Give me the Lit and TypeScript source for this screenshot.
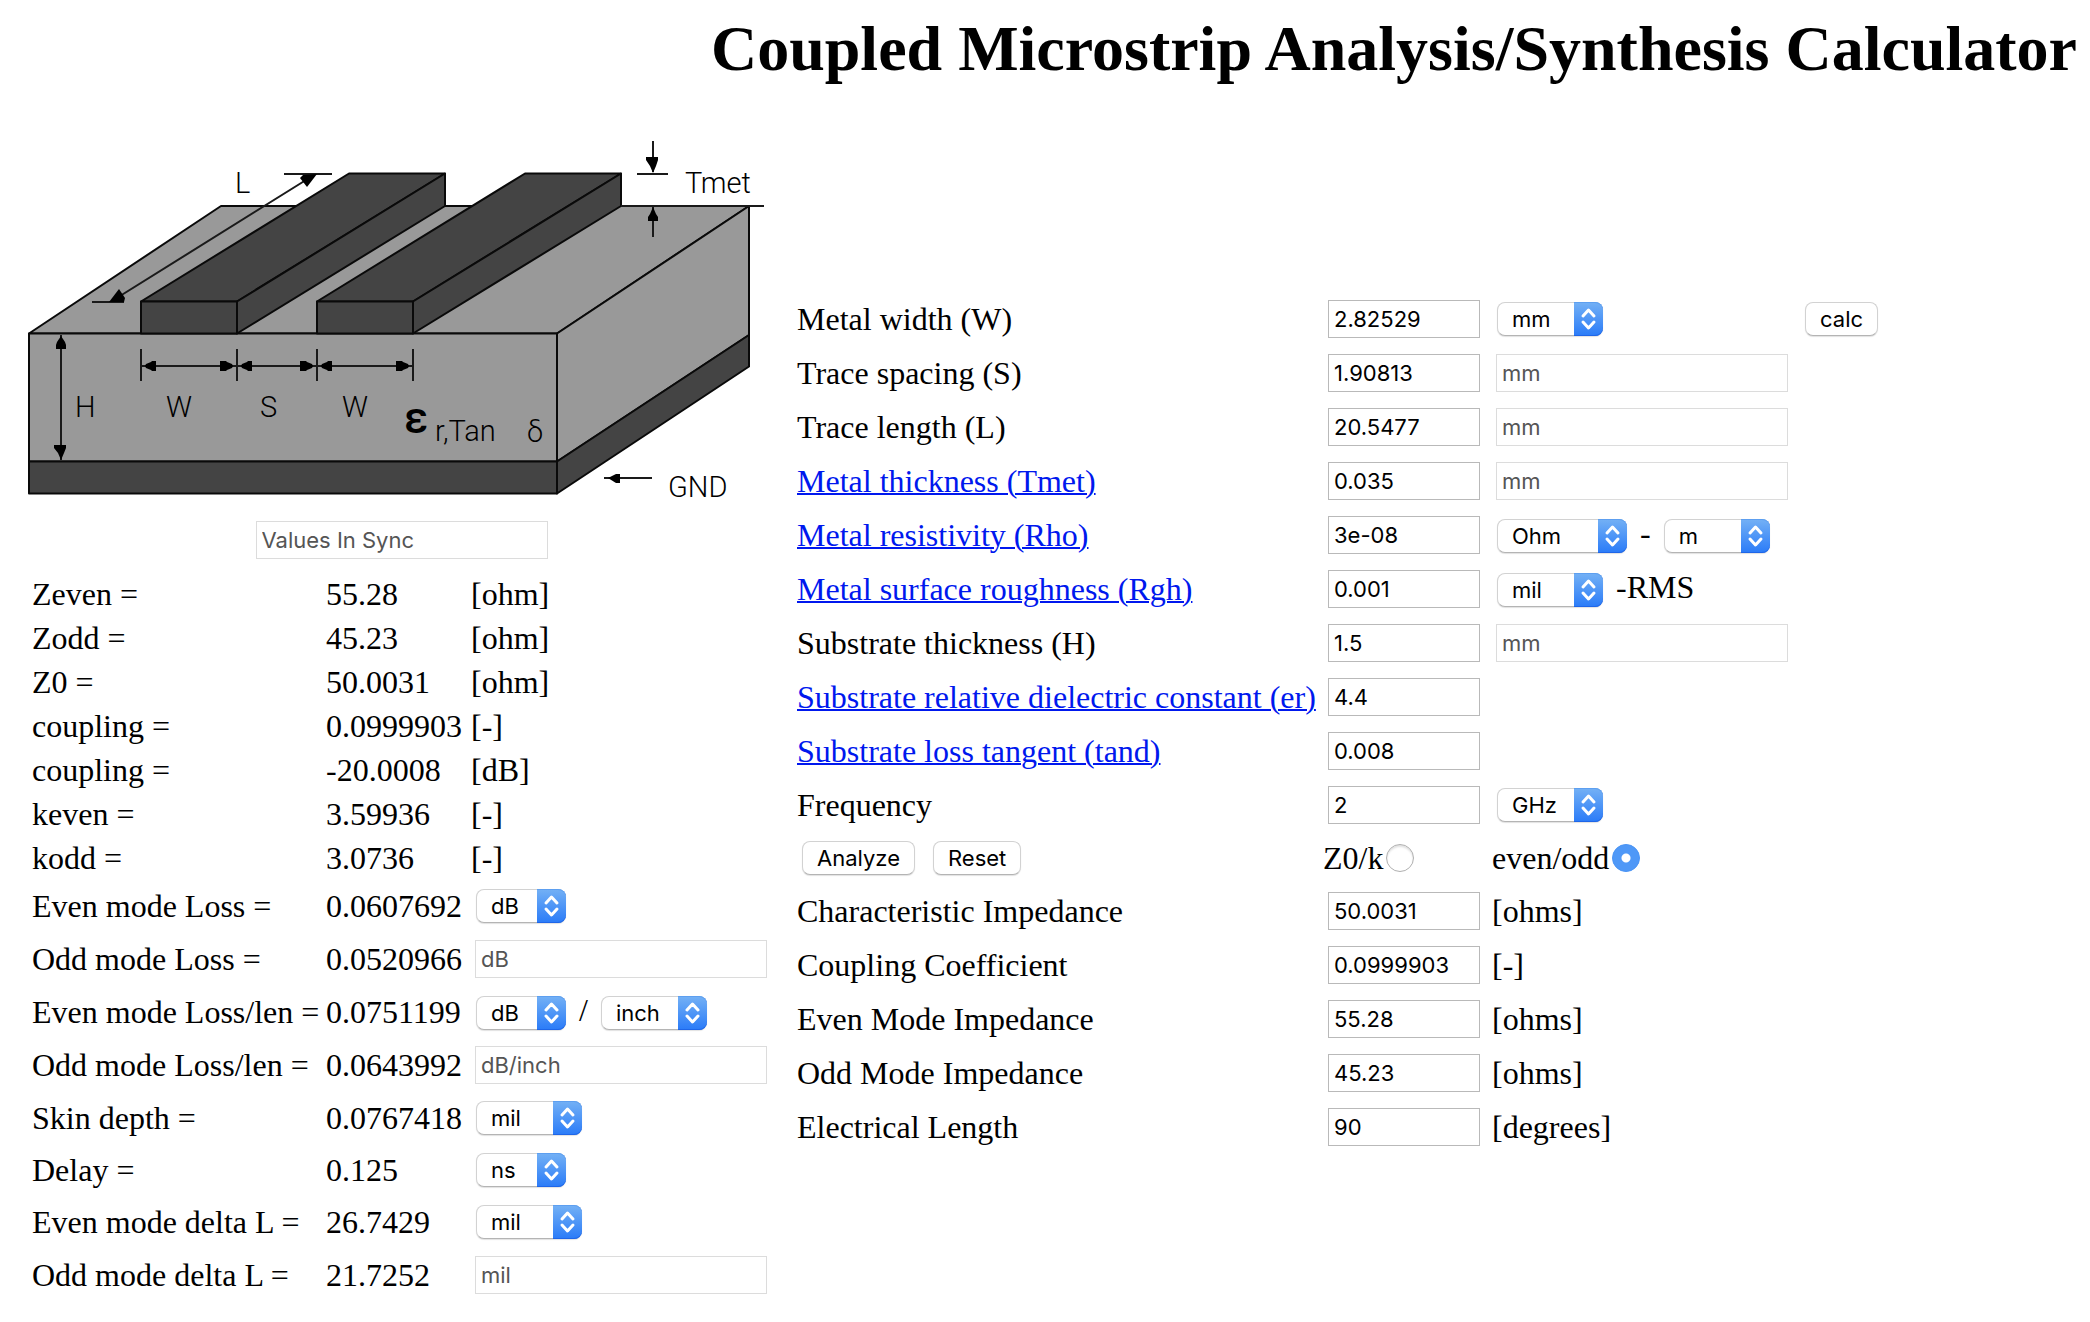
import { LitElement, html, svg, css, nothing } from "lit";
import { customElement, property } from "lit/decorators.js";

type Unit =
  | { kind: "text"; text: string }
  | { kind: "locked"; text: string }
  | { kind: "pick"; text: string; size: string; join?: string; next?: { text: string; size: string } };

interface Result {
  label: string;
  value: string;
  unit: Unit;
}

interface Field {
  id: string;
  label: string;
  value: string;
  link?: boolean;
  unit?: Unit;
  calc?: boolean;
}

const ohm: Unit = { kind: "text", text: "[ohm]" };
const none: Unit = { kind: "text", text: "[-]" };
const mil: Unit = { kind: "pick", text: "mil", size: "m" };
const lockedMm: Unit = { kind: "locked", text: "mm" };

const RESULTS: Result[] = [
  { label: "Zeven =", value: "55.28", unit: ohm },
  { label: "Zodd =", value: "45.23", unit: ohm },
  { label: "Z0 =", value: "50.0031", unit: ohm },
  { label: "coupling =", value: "0.0999903", unit: none },
  { label: "coupling =", value: "-20.0008", unit: { kind: "text", text: "[dB]" } },
  { label: "keven =", value: "3.59936", unit: none },
  { label: "kodd =", value: "3.0736", unit: none },
  { label: "Even mode Loss =", value: "0.0607692", unit: { kind: "pick", text: "dB", size: "s" } },
  { label: "Odd mode Loss =", value: "0.0520966", unit: { kind: "locked", text: "dB" } },
  {
    label: "Even mode Loss/len =",
    value: "0.0751199",
    unit: { kind: "pick", text: "dB", size: "s", join: "/", next: { text: "inch", size: "m" } },
  },
  { label: "Odd mode Loss/len =", value: "0.0643992", unit: { kind: "locked", text: "dB/inch" } },
  { label: "Skin depth =", value: "0.0767418", unit: mil },
  { label: "Delay =", value: "0.125", unit: { kind: "pick", text: "ns", size: "s" } },
  { label: "Even mode delta L =", value: "26.7429", unit: mil },
  { label: "Odd mode delta L =", value: "21.7252", unit: { kind: "locked", text: "mil" } },
];

const INPUTS: Field[] = [
  { id: "w", label: "Metal width (W)", value: "2.82529", unit: { kind: "pick", text: "mm", size: "m" }, calc: true },
  { id: "s", label: "Trace spacing (S)", value: "1.90813", unit: lockedMm },
  { id: "l", label: "Trace length (L)", value: "20.5477", unit: lockedMm },
  { id: "tmet", label: "Metal thickness (Tmet)", value: "0.035", link: true, unit: lockedMm },
  {
    id: "rho",
    label: "Metal resistivity (Rho)",
    value: "3e-08",
    link: true,
    unit: { kind: "pick", text: "Ohm", size: "l", join: "-", next: { text: "m", size: "m" } },
  },
  {
    id: "rgh",
    label: "Metal surface roughness (Rgh)",
    value: "0.001",
    link: true,
    unit: { kind: "pick", text: "mil", size: "m", join: "-RMS" },
  },
  { id: "h", label: "Substrate thickness (H)", value: "1.5", unit: lockedMm },
  { id: "er", label: "Substrate relative dielectric constant (er)", value: "4.4", link: true },
  { id: "tand", label: "Substrate loss tangent (tand)", value: "0.008", link: true },
  { id: "freq", label: "Frequency", value: "2", unit: { kind: "pick", text: "GHz", size: "m" } },
];

const TARGETS: Field[] = [
  { id: "z0", label: "Characteristic Impedance", value: "50.0031", unit: { kind: "text", text: "[ohms]" } },
  { id: "k", label: "Coupling Coefficient", value: "0.0999903", unit: none },
  { id: "z0e", label: "Even Mode Impedance", value: "55.28", unit: { kind: "text", text: "[ohms]" } },
  { id: "z0o", label: "Odd Mode Impedance", value: "45.23", unit: { kind: "text", text: "[ohms]" } },
  { id: "len", label: "Electrical Length", value: "90", unit: { kind: "text", text: "[degrees]" } },
];

const controls = css`
  input,
  select,
  button {
    box-sizing: border-box;
    margin: 0;
    font: 22px/26px Inter, "Liberation Sans", sans-serif;
    color: #000;
  }
`;

/* Drop-down with a blue stepper cap at its right end. */
@customElement("unit-select")
export class UnitSelect extends LitElement {
  @property() text = "";
  @property() size = "m";
  @property() name = "";

  static styles = [
    controls,
    css`
      :host {
        display: inline-grid;
      }
      select,
      .cap {
        grid-area: 1 / 1;
      }
      select {
        appearance: none;
        height: 34px;
        padding: 0 30px 0 14px;
        border: 1px solid #d2d2d2;
        border-bottom-color: #b4b4b4;
        border-radius: 8px;
        background: #fff;
        box-shadow: 0 1px 1px rgba(0, 0, 0, 0.12);
      }
      .s {
        width: 90px;
      }
      .m {
        width: 106px;
      }
      .l {
        width: 130px;
      }
      .cap {
        justify-self: end;
        width: 29px;
        height: 34px;
        border-radius: 0 8px 8px 0;
        background: linear-gradient(#74b1f5, #2a7bf8);
        box-shadow: inset 0 -1px #1f66e8, inset 0 1px #5d9ff0;
        pointer-events: none;
      }
      path {
        fill: none;
        stroke: #fff;
        stroke-width: 3;
        stroke-linecap: round;
        stroke-linejoin: round;
      }
    `,
  ];

  render() {
    return html`<select class=${this.size} aria-label=${this.name}>
        <option>${this.text}</option>
      </select>
      <svg class="cap" viewBox="0 0 29 34" aria-hidden="true">
        <path d="M9 14l5.5-6 5.5 6M9 20l5.5 6 5.5-6" />
      </svg>`;
  }
}

/* Oblique view of two coupled strips on a grounded substrate. */
@customElement("strip-diagram")
export class StripDiagram extends LitElement {
  static styles = css`
    :host {
      display: block;
    }
    svg {
      display: block;
      width: 740px;
      height: 368px;
    }
    .edge {
      stroke: #0a0a0a;
      stroke-width: 2;
      stroke-linejoin: round;
    }
    .sub {
      fill: #999;
    }
    .metal {
      fill: #444;
    }
    .dim {
      fill: none;
      stroke: #1a1a1a;
      stroke-width: 2;
    }
    .head {
      fill: #000;
    }
    text {
      font: 300 29px Roboto, "Liberation Sans", sans-serif;
      fill: #000;
    }
    .eps {
      font-size: 44px;
      font-weight: 500;
    }
  `;

  private strip(x: number) {
    return svg`<g class="edge metal">
      <path d="M${x} 301.5h96L${x + 304} 173.5h-96z" />
      <path d="M${x + 96} 301.5L${x + 304} 173.5v32.5L${x + 96} 333.5z" />
      <path d="M${x} 301.5h96v32h-96z" />
    </g>`;
  }

  private span(a: number, b: number) {
    return svg`<path class="dim" d="M${a} 366H${b}" />
      <path class="head" d="M${a + 4} 366l1-2 5-2 1-1h4v10h-4l-1-1-5-2zM${b - 4} 366l-1-2-5-2-1-1h-6v10h6l1-1 5-2z" />`;
  }

  render() {
    return html`<svg viewBox="28 140 740 368" role="img" aria-label="Coupled microstrip geometry">
      <g class="edge">
        <path class="sub" d="M29 333.5L221 206H749L557 333.5z" />
        <path class="sub" d="M557 333.5L749 206V335L557 461.5z" />
        <path class="metal" d="M557 461.5L749 335V366.5L557 493.5z" />
        <path class="sub" d="M29 333.5H557V461.5H29z" />
        <path class="metal" d="M29 461.5H557V493.5H29z" />
      </g>
      ${this.strip(141)} ${this.strip(317)}
      <path
        class="dim"
        d="M621 206H764M637 174H668M653 141V172M653 207V237M604 478H652M61 335V460M92 302H124M284 174H332M112 301L314 175M141 349V381M237 349V381M317 349V381M413 349V381"
      />
      ${this.span(141, 237)} ${this.span(237, 317)} ${this.span(317, 413)}
      <g class="head">
        <path d="M61 336l4 6 1 3v4H56v-4l1-3z" />
        <path d="M61 460l-3-7-4-5v-3h12v3l-2 5z" />
        <path d="M109 302l10-13 6 9-1 4z" />
        <path d="M317 174l-10 13-7-9 3-3z" />
        <path d="M653 173l-3-7-4-6v-3h12v3l-2 6z" />
        <path d="M653 207l3 7 2 3v4h-10v-4l2-3z" />
        <path d="M608 478l8-4h4v9h-4z" />
      </g>
      <text x="235" y="193">L</text>
      <text x="685" y="193">Tmet</text>
      <text x="75" y="417">H</text>
      <text x="166" y="417">W</text>
      <text x="260" y="417">S</text>
      <text x="342" y="417">W</text>
      <text class="eps" x="404" y="433">ε</text>
      <text x="435" y="441">r,Tan</text>
      <text x="527" y="442">δ</text>
      <text x="668" y="497">GND</text>
    </svg>`;
  }
}

@customElement("app-root")
export class AppRoot extends LitElement {
  static styles = [
    controls,
    css`
      :host {
        display: block;
        font: 32px/36px "Liberation Serif", "Times New Roman", serif;
        color: #000;
        background: #fff;
      }
      h1 {
        margin: 0;
        padding: 13px 13px 0;
        font-size: 64px;
        line-height: 72px;
        text-align: right;
      }
      .page {
        display: flex;
        align-items: center;
        gap: 22px;
        padding: 55px 28px 16px;
      }
      .outputs {
        flex: none;
        padding-bottom: 4px;
      }
      .sync {
        display: flex;
        align-items: center;
        justify-content: center;
        height: 64px;
      }
      table {
        border-collapse: collapse;
      }
      th,
      td {
        padding: 0;
        font-weight: normal;
        text-align: left;
        vertical-align: middle;
        white-space: nowrap;
      }
      .row-text {
        height: 44px;
      }
      .row-pick {
        height: 52px;
      }
      .row-box {
        height: 54px;
      }
      .result-label {
        width: 294px;
        padding-left: 4px;
      }
      .result-value {
        width: 145px;
      }
      .result-unit {
        width: 304px;
      }
      .field-label {
        width: 526px;
      }
      .field-value {
        width: 169px;
      }
      .field-unit {
        width: 313px;
      }
      a {
        color: #0018ee;
        text-decoration-thickness: 2px;
      }
      .box {
        height: 38px;
        padding: 0 5px;
        border: 1px solid #b9b9b9;
        border-radius: 0;
        background: #fff;
      }
      .value {
        width: 152px;
        margin-left: 5px;
      }
      .locked {
        width: 292px;
        border-color: #dcdcdc;
        color: #555;
      }
      td .locked {
        margin-left: 4px;
      }
      .box,
      .pick,
      .actions,
      .choice {
        display: flex;
      }
      .pick {
        align-items: baseline;
        gap: 13px;
        padding-left: 5px;
        line-height: 32px;
      }
      .actions {
        gap: 18px;
        padding-left: 5px;
      }
      button {
        display: block;
        height: 34px;
        padding: 0 14px;
        border: 1px solid #d2d2d2;
        border-bottom-color: #b4b4b4;
        border-radius: 8px;
        background: #fff;
        box-shadow: 0 1px 1px rgba(0, 0, 0, 0.12);
      }
      .choice {
        align-items: center;
        gap: 3px;
      }
      .radio {
        appearance: none;
        width: 28px;
        height: 28px;
        border: 1px solid #b0b0b0;
        border-radius: 50%;
        background: #fff;
        box-shadow: inset 0 2px 2px rgba(0, 0, 0, 0.12);
      }
      .radio:checked {
        border-color: #4a94f5;
        background: radial-gradient(circle, #fff 0 4px, #4f98f7 5px);
        box-shadow: none;
      }
    `,
  ];

  private unit(unit: Unit | undefined, name: string) {
    if (!unit) return nothing;
    if (unit.kind === "text") return unit.text;
    if (unit.kind === "locked")
      return html`<input class="box locked" aria-label="${name} unit" .value=${unit.text} readonly />`;
    return html`<div class="pick">
      <unit-select .text=${unit.text} .size=${unit.size} .name="${name} unit"></unit-select>
      ${unit.join ? html`<span>${unit.join}</span>` : nothing}
      ${unit.next
        ? html`<unit-select .text=${unit.next.text} .size=${unit.next.size} .name="${name} per unit"></unit-select>`
        : nothing}
    </div>`;
  }

  private result(r: Result) {
    const row = { text: "row-text", pick: "row-pick", locked: "row-box" }[r.unit.kind];
    return html`<tr class=${row}>
      <th class="result-label" scope="row">${r.label}</th>
      <td class="result-value">${r.value}</td>
      <td class="result-unit">${this.unit(r.unit, r.label)}</td>
    </tr>`;
  }

  private field(f: Field) {
    return html`<tr class="row-box">
      <td class="field-label">
        <label for=${f.id}>${f.link ? html`<a href="#${f.id}">${f.label}</a>` : f.label}</label>
      </td>
      <td class="field-value"><input class="box value" id=${f.id} .value=${f.value} /></td>
      <td class="field-unit">${this.unit(f.unit, f.label)}</td>
      <td>${f.calc ? html`<button type="button">calc</button>` : nothing}</td>
    </tr>`;
  }

  render() {
    return html`<h1>Coupled Microstrip Analysis/Synthesis Calculator</h1>
      <main class="page">
        <section class="outputs">
          <strip-diagram></strip-diagram>
          <div class="sync">
            <input class="box locked" aria-label="Status" .value=${"Values In Sync"} readonly />
          </div>
          <table>
            <tbody>
              ${RESULTS.map((r) => this.result(r))}
            </tbody>
          </table>
        </section>
        <form>
          <table>
            <tbody>
              ${INPUTS.map((f) => this.field(f))}
              <tr class="row-pick">
                <td class="field-label">
                  <div class="actions">
                    <button type="button">Analyze</button>
                    <button type="button">Reset</button>
                  </div>
                </td>
                <td class="field-value">
                  <label class="choice">Z0/k<input class="radio" type="radio" name="mode" /></label>
                </td>
                <td class="field-unit">
                  <label class="choice">even/odd<input class="radio" type="radio" name="mode" checked /></label>
                </td>
                <td></td>
              </tr>
              ${TARGETS.map((f) => this.field(f))}
            </tbody>
          </table>
        </form>
      </main>`;
  }
}
